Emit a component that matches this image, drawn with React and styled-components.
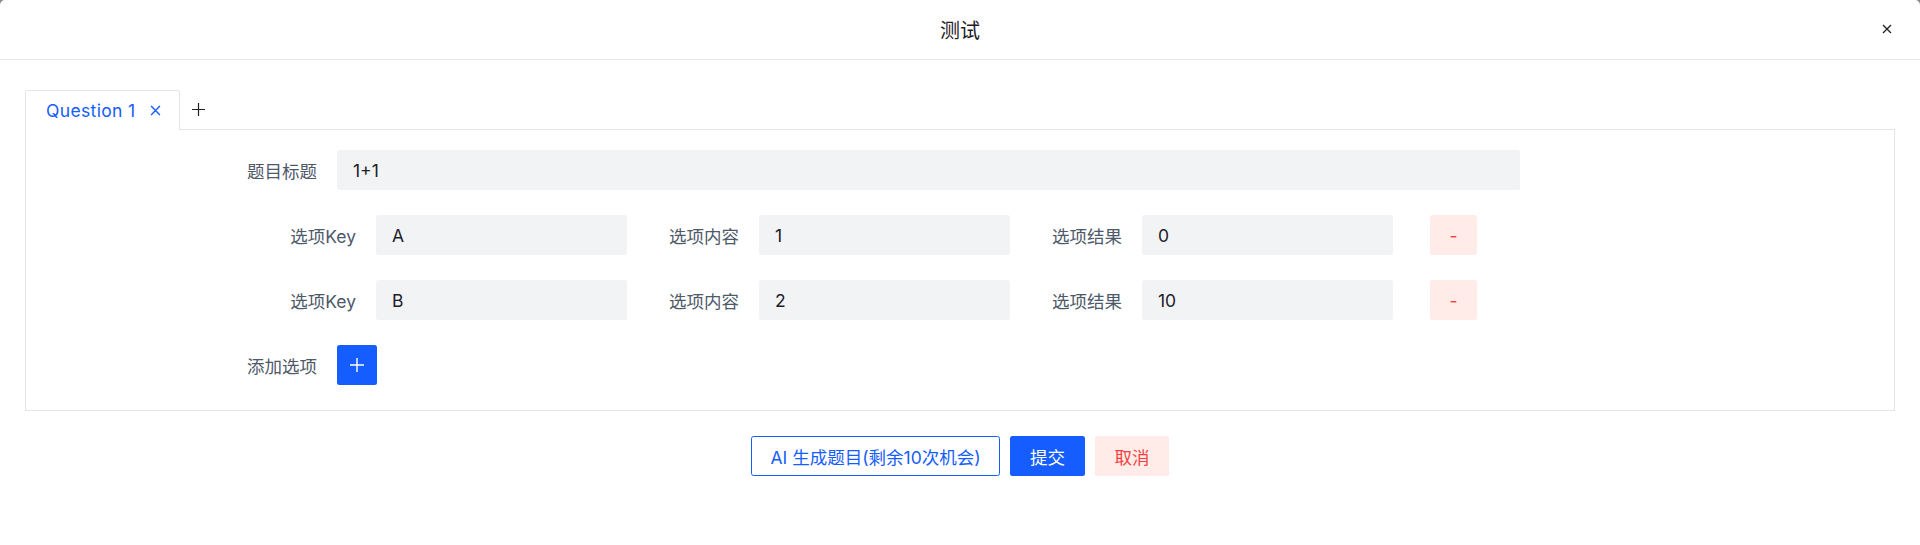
import React from 'react';
import styled, { createGlobalStyle } from 'styled-components';

const GlobalStyle = createGlobalStyle`
  html, body {
    margin: 0;
    padding: 0;
    background: #86888c;
  }
  * {
    box-sizing: border-box;
  }
  body {
    font-family: Inter, "Noto Sans CJK SC", sans-serif;
    color: #1d2129;
  }
`;

const Modal = styled.div`
  min-height: 545px;
  background: #fff;
  border-radius: 5px 5px 0 0;
`;

const Header = styled.div`
  position: relative;
  height: 60px;
  display: flex;
  align-items: center;
  justify-content: center;
  border-bottom: 1px solid #e5e6eb;
  font-size: 20px;
  font-weight: 400;
  color: #1d2129;
`;

const CloseButton = styled.span`
  position: absolute;
  right: 28px;
  top: 24px;
  width: 10px;
  height: 10px;
  display: flex;
  cursor: pointer;
`;

const Body = styled.div`
  padding: 30px 25px 40px;
`;

const TabBar = styled.div`
  display: flex;
  height: 40px;
`;

const Tab = styled.div`
  display: flex;
  align-items: center;
  height: 40px;
  padding: 0 18px 0 20px;
  border: 1px solid #e5e6eb;
  border-bottom: none;
  border-radius: 2.5px 2.5px 0 0;
  background: #fff;
  color: ${(p) => (p.active ? '#165dff' : '#4e5969')};
  font-size: 17.5px;
  letter-spacing: 0.35px;
`;

const TabClose = styled.span`
  display: flex;
  margin-left: 14px;
`;

const TabFill = styled.div`
  flex: 1;
  display: flex;
  align-items: center;
  padding-left: 12px;
  border-bottom: 1px solid #e5e6eb;
`;

const Panel = styled.div`
  border: 1px solid #e5e6eb;
  border-top: none;
  padding-top: 20px;
`;

const Row = styled.div`
  display: flex;
  align-items: center;
  height: 40px;
  margin-bottom: 25px;
  padding-left: ${(p) => p.indent || 0}px;
`;

const Label = styled.label`
  flex: none;
  width: ${(p) => p.width}px;
  padding-right: 20px;
  text-align: right;
  font-size: 17.5px;
  color: #4e5969;
  white-space: nowrap;
`;

const Input = styled.div`
  flex: none;
  width: ${(p) => p.width}px;
  height: 40px;
  display: flex;
  align-items: center;
  padding: 0 16px;
  background: #f2f3f5;
  border-radius: 2.5px;
  font-size: 17.5px;
  color: #1d2129;
`;

const Item = styled.div`
  display: flex;
  align-items: center;
  margin-right: 30px;
`;

const Button = styled.button`
  height: 40px;
  padding: 0 18.75px;
  display: inline-flex;
  align-items: center;
  justify-content: center;
  border-radius: 2.5px;
  font-family: inherit;
  font-size: 17.5px;
  cursor: pointer;
  border: 1px solid ${(p) => (p.variant === 'outline' ? '#165dff' : 'transparent')};
  background: ${(p) =>
    p.variant === 'primary' ? '#165dff' : p.variant === 'danger' ? '#ffece8' : '#fff'};
  color: ${(p) =>
    p.variant === 'primary' ? '#fff' : p.variant === 'danger' ? '#f53f3f' : '#165dff'};
`;

const DeleteButton = styled(Button)`
  width: 47px;
  padding: 0;
  margin-left: 7px;
`;

const IconButton = styled(Button)`
  width: 40px;
  padding: 0;
`;

const Footer = styled.div`
  display: flex;
  justify-content: center;
  gap: 10px;
  margin-top: 25px;
`;

const Cross = ({ size, color }) => (
  <svg width={size} height={size} viewBox="0 0 10 10" fill="none">
    <path d="M1 1L9 9M9 1L1 9" stroke={color} strokeWidth="1.3" />
  </svg>
);

const Plus = ({ size, color, weight = 1.4 }) => (
  <svg width={size} height={size} viewBox="0 0 14 14" fill="none">
    <path d="M7 0V14M0 7H14" stroke={color} strokeWidth={weight} />
  </svg>
);

const options = [
  { key: 'A', content: '1', result: '0' },
  { key: 'B', content: '2', result: '10' },
];

const App = () => (
  <>
    <GlobalStyle />
    <Modal>
      <Header>
        测试
        <CloseButton>
          <Cross size={10} color="#1d2129" />
        </CloseButton>
      </Header>
      <Body>
        <TabBar>
          <Tab active>
            Question 1
            <TabClose>
              <Cross size={11} color="#165dff" />
            </TabClose>
          </Tab>
          <TabFill>
            <Plus size={13} color="#1d2129" weight={1.3} />
          </TabFill>
        </TabBar>
        <Panel>
          <Row>
            <Label width={311}>题目标题</Label>
            <Input width={1183}>1+1</Input>
          </Row>
          {options.map((o) => (
            <Row key={o.key} indent={248}>
              <Item>
                <Label width={102}>选项Key</Label>
                <Input width={251}>{o.key}</Input>
              </Item>
              <Item>
                <Label width={102}>选项内容</Label>
                <Input width={251}>{o.content}</Input>
              </Item>
              <Item>
                <Label width={102}>选项结果</Label>
                <Input width={251}>{o.result}</Input>
              </Item>
              <DeleteButton variant="danger">-</DeleteButton>
            </Row>
          ))}
          <Row>
            <Label width={311}>添加选项</Label>
            <IconButton variant="primary">
              <Plus size={14} color="#fff" />
            </IconButton>
          </Row>
        </Panel>
        <Footer>
          <Button variant="outline">AI 生成题目(剩余10次机会)</Button>
          <Button variant="primary">提交</Button>
          <Button variant="danger">取消</Button>
        </Footer>
      </Body>
    </Modal>
  </>
);

export default App;
